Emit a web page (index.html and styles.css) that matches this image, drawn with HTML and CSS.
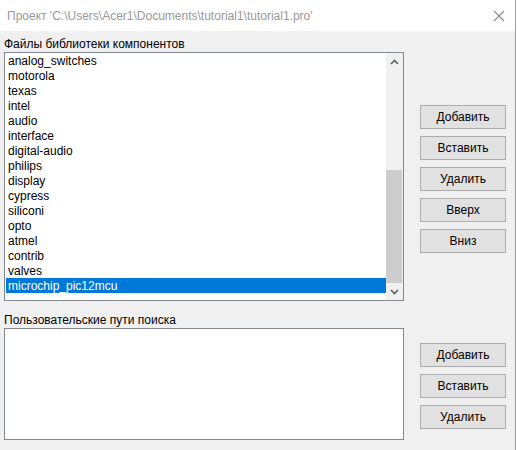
FILE: index.html
```html
<!DOCTYPE html>
<html lang="ru">
  <head>
    <meta charset="utf-8">
    <title>Проект</title>
    <link rel="stylesheet" href="styles.css">
  </head>
  <body>
    <div class="window">
      <div class="titlebar">
        <span class="title">Проект 'C:\Users\Acer1\Documents\tutorial1\tutorial1.pro'</span>
        <svg class="close" width="12" height="12" viewBox="0 0 12 12">
          <path d="M1 1L11 11M11 1L1 11" stroke="#8a8a8a" stroke-width="1.1" fill="none"/>
        </svg>
      </div>

      <div class="dialog">
        <div class="label">Файлы библиотеки компонентов</div>
        <div class="row">
          <div class="listbox libs">
            <ul class="items">
              <li>analog_switches</li>
              <li>motorola</li>
              <li>texas</li>
              <li>intel</li>
              <li>audio</li>
              <li>interface</li>
              <li>digital-audio</li>
              <li>philips</li>
              <li>display</li>
              <li>cypress</li>
              <li>siliconi</li>
              <li>opto</li>
              <li>atmel</li>
              <li>contrib</li>
              <li>valves</li>
              <li class="selected">microchip_pic12mcu</li>
            </ul>
            <div class="scrollbar">
              <div class="arrow">
                <svg width="9" height="6" viewBox="0 0 9 6"><path d="M1 5L4.5 1.5L8 5" stroke="#606060" stroke-width="1.6" fill="none"/></svg>
              </div>
              <div class="track"><div class="thumb"></div></div>
              <div class="arrow">
                <svg width="9" height="6" viewBox="0 0 9 6"><path d="M1 1L4.5 4.5L8 1" stroke="#606060" stroke-width="1.6" fill="none"/></svg>
              </div>
            </div>
          </div>
          <div class="buttons top">
            <button>Добавить</button>
            <button>Вставить</button>
            <button>Удалить</button>
            <button>Вверх</button>
            <button>Вниз</button>
          </div>
        </div>

        <div class="label second">Пользовательские пути поиска</div>
        <div class="row">
          <div class="listbox paths"></div>
          <div class="buttons bottom">
            <button>Добавить</button>
            <button>Вставить</button>
            <button>Удалить</button>
          </div>
        </div>
      </div>
    </div>
  </body>
</html>
```

FILE: styles.css
```css
html, body {
  margin: 0;
  padding: 0;
  background: #fff;
}
body {
  font-family: "Liberation Sans", Arial, sans-serif;
  font-size: 12px;
  color: #000;
}
.window {
  width: 515px;
  height: 450px;
  border-right: 1px solid #a0a0a0;
  display: flex;
  flex-direction: column;
}
.titlebar {
  height: 31px;
  display: flex;
  align-items: center;
  justify-content: space-between;
  padding: 0 8px 0 7px;
  background: #fff;
}
.title {
  color: #999;
  font-size: 12px;
  padding-top: 1px;
}
.close {
  margin-right: 2px;
}
.dialog {
  flex: 1;
  background: #f0f0f0;
  padding: 0 0 0 4px;
}
.label {
  height: 21px;
  line-height: 14px;
  padding-top: 6px;
  box-sizing: border-box;
}
.label.second {
  height: 27px;
  padding-top: 12px;
}
.row {
  display: flex;
  gap: 16px;
}
.listbox {
  width: 400px;
  box-sizing: border-box;
  border: 1px solid #828790;
  background: #fff;
  display: flex;
}
.libs {
  height: 249px;
}
.paths {
  height: 112px;
}
.items {
  list-style: none;
  margin: 0;
  padding: 0 0 0 1px;
  flex: 1;
}
.items li {
  height: 15px;
  line-height: 16px;
  padding-left: 2px;
}
.items li.selected {
  background: #0078d7;
  color: #fff;
}
.scrollbar {
  width: 17px;
  background: #f0f0f0;
  display: flex;
  flex-direction: column;
}
.arrow {
  height: 17px;
  display: flex;
  align-items: center;
  justify-content: center;
}
.track {
  flex: 1;
  display: flex;
  flex-direction: column;
  justify-content: flex-end;
  padding: 0 1px 0 0;
}
.thumb {
  height: 113px;
  background: #cdcdcd;
}
.buttons {
  display: flex;
  flex-direction: column;
  gap: 7px;
}
.buttons.top {
  padding-top: 53px;
}
.buttons.bottom {
  padding-top: 15px;
}
button {
  width: 86px;
  height: 24px;
  border: 1px solid #adadad;
  background: #e1e1e1;
  font-family: inherit;
  font-size: 12px;
  color: #000;
  padding: 0;
}
```
